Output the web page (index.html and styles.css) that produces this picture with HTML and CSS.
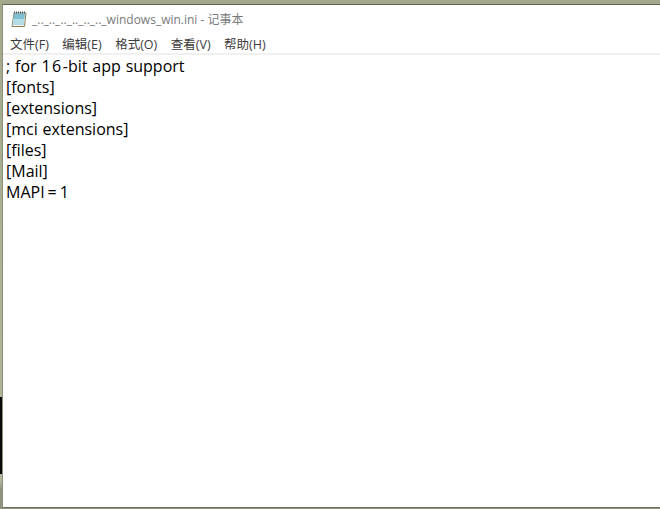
FILE: index.html
```html
<!DOCTYPE html>
<html lang="zh">
<head>
<meta charset="utf-8">
<title>_.._.._.._.._.._.._windows_win.ini - 记事本</title>
<link rel="stylesheet" href="styles.css">
</head>
<body>
<div class="desk-strip"></div>
<main class="window">
  <header class="titlebar">
    <svg class="app-icon" width="18" height="18" viewBox="0 0 18 18">
      <path d="M4 3 L16 3 L14.5 16.5 L2 16.5 Z" fill="#f2f2ea" stroke="#8d7f5c"/>
      <path d="M4.2 3.5 L15 3.5 L13.6 15 L2.6 15 Z" fill="#7fbfd4"/>
      <path d="M3.4 9 L14.3 9 L13.6 15 L2.6 15 Z" fill="#b4dde8"/>
      <path d="M4.5 1.5 V3.5 M6.5 1.5 V3.5 M8.5 1.5 V3.5 M10.5 1.5 V3.5 M12.5 1.5 V3.5 M14.5 1.5 V3.5" stroke="#3e5a66" stroke-width="1"/>
    </svg>
    <span class="title">_.._.._.._.._.._.._windows_win.ini - 记事本</span>
  </header>
  <nav class="menubar">
    <span class="menu-item">文件(F)</span>
    <span class="menu-item">编辑(E)</span>
    <span class="menu-item">格式(O)</span>
    <span class="menu-item">查看(V)</span>
    <span class="menu-item">帮助(H)</span>
  </nav>
  <div class="editor">
    <div class="line"><span>; for </span><span class="digits">16</span><span>-bit app support</span></div>
    <div class="line"><span>[fonts]</span></div>
    <div class="line"><span>[extensions]</span></div>
    <div class="line"><span>[mci extensions]</span></div>
    <div class="line"><span>[files]</span></div>
    <div class="line"><span>[Mail]</span></div>
    <div class="line"><span>MAPI</span><span class="equals">=</span><span class="digits">1</span></div>
  </div>
</main>
</body>
</html>
```

FILE: styles.css
```css
html, body {
  margin: 0;
  height: 100%;
  overflow: hidden;
}
body {
  background: linear-gradient(#a3a88c 0, #b4b79f 480px, #8f927c 490px);
  box-sizing: border-box;
  padding: 4px 0 1px 2px;
  display: flex;
  position: relative;
  font-family: "Open Sans", "Noto Sans CJK SC", sans-serif;
}
.desk-strip {
  position: absolute;
  left: 0;
  top: 397px;
  width: 2px;
  height: 77px;
  background: #0a0a0a;
}
.window {
  flex: 1;
  background: #fff;
  display: flex;
  flex-direction: column;
  border-top: 1px solid #5f6450;
  border-bottom: 1px solid #6c705c;
  border-left: 1px solid #8b8f78;
  min-width: 0;
}
.titlebar {
  display: flex;
  align-items: center;
  height: 28px;
  padding-left: 7px;
  gap: 4px;
}
.app-icon {
  flex: none;
}
.title {
  font-size: 12px;
  color: #7a7a7a;
  white-space: nowrap;
}
.menubar {
  display: flex;
  gap: 13.5px;
  height: 19px;
  padding-top: 1px;
  align-items: center;
  padding-left: 7px;
  border-bottom: 2px solid #f0f0f0;
  font-size: 12.5px;
  color: #3c3c3c;
}
.editor {
  flex: 1;
  padding: 1px 0 0 3px;
  font-size: 16px;
  line-height: 21px;
  word-spacing: 0.7px;
  color: #000;
}
.line {
  white-space: pre;
}
.digits {
  letter-spacing: 1.5px;
}
.equals {
  margin: 0 3px;
}
```
